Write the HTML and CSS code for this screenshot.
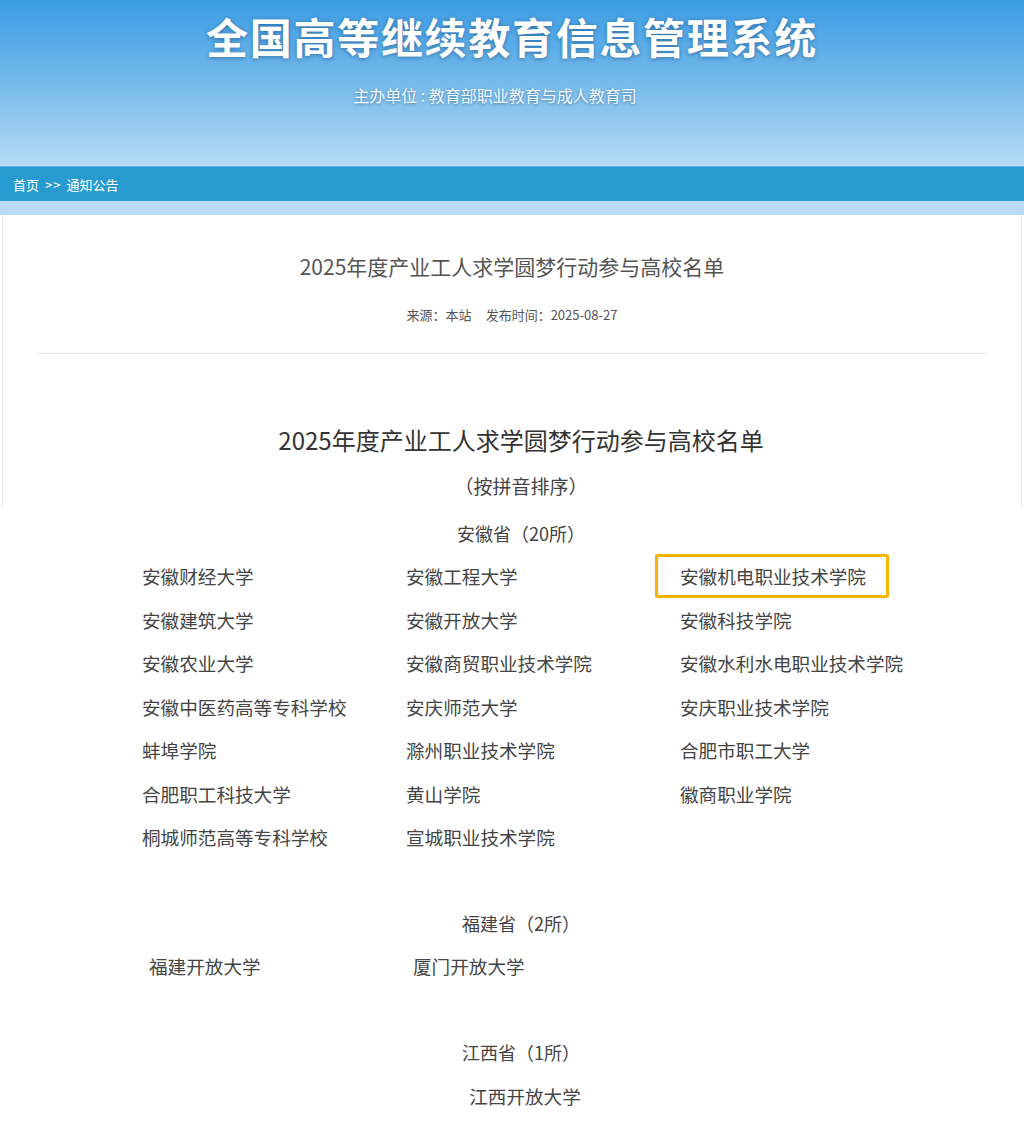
FILE: index.html
```html
<!DOCTYPE html>
<html lang="zh-CN">
<head>
  <meta charset="UTF-8">
  <title>2025年度产业工人求学圆梦行动参与高校名单</title>
  <link rel="stylesheet" href="styles.css">
</head>
<body>
  <!-- 页头 -->
  <div class="header">
    <h1 class="site-title">全国高等继续教育信息管理系统</h1>
    <p class="site-sub">主办单位 : 教育部职业教育与成人教育司</p>
  </div>

  <!-- 导航 -->
  <div class="crumb">
    <a href="#">首页</a><span class="sep">&gt;&gt;</span><a href="#">通知公告</a>
  </div>
  <div class="crumb-gap"></div>

  <!-- 正文 -->
  <div class="article">
    <div class="article-head">
      <h2 class="article-title">2025年度产业工人求学圆梦行动参与高校名单</h2>
      <div class="article-meta"><span>来源：本站</span><span>发布时间：2025-08-27</span></div>
    </div>
    <div class="article-body">
      <h3 class="list-title">2025年度产业工人求学圆梦行动参与高校名单</h3>
      <p class="list-note">（按拼音排序）</p>
    </div>
  </div>

  <div class="list">
    <p class="province">安徽省（20所）</p>
    <div class="school-grid">
      <div class="school">安徽财经大学</div>
      <div class="school">安徽工程大学</div>
      <div class="school mark">安徽机电职业技术学院</div>
      <div class="school">安徽建筑大学</div>
      <div class="school">安徽开放大学</div>
      <div class="school">安徽科技学院</div>
      <div class="school">安徽农业大学</div>
      <div class="school">安徽商贸职业技术学院</div>
      <div class="school">安徽水利水电职业技术学院</div>
      <div class="school">安徽中医药高等专科学校</div>
      <div class="school">安庆师范大学</div>
      <div class="school">安庆职业技术学院</div>
      <div class="school">蚌埠学院</div>
      <div class="school">滁州职业技术学院</div>
      <div class="school">合肥市职工大学</div>
      <div class="school">合肥职工科技大学</div>
      <div class="school">黄山学院</div>
      <div class="school">徽商职业学院</div>
      <div class="school">桐城师范高等专科学校</div>
      <div class="school">宣城职业技术学院</div>
    </div>

    <p class="province fj">福建省（2所）</p>
    <div class="school-grid two-col">
      <div class="school">福建开放大学</div>
      <div class="school">厦门开放大学</div>
    </div>

    <p class="province jx">江西省（1所）</p>
    <div class="school-single">江西开放大学</div>
  </div>
</body>
</html>
```

FILE: styles.css
```css
body {
  margin: 0;
  font-family: "Noto Sans CJK SC", "Liberation Sans", sans-serif;
  background: #fff;
  color: #333;
}
.header {
  height: 166px;
  background: linear-gradient(to bottom, #3c9ce3 0%, #6fb7ea 45%, #b6dbf5 100%);
  text-align: center;
  overflow: hidden;
}
.site-title {
  margin: 0;
  padding-top: 11px;
  font-size: 42px;
  line-height: 50px;
  letter-spacing: 1.7px;
  font-weight: bold;
  color: #fff;
  text-shadow: 0 1px 4px rgba(0, 40, 90, 0.45);
}
.site-sub {
  margin: 23px 34px 0 0;
  font-size: 16px;
  line-height: 22px;
  color: #f4f9ff;
  text-shadow: 0 1px 3px rgba(0, 40, 90, 0.45);
}
.crumb {
  height: 35px;
  line-height: 35px;
  padding-left: 13px;
  background: #279acf;
  border-top: 1px solid #5db6e4;
  box-sizing: border-box;
  font-size: 13px;
  color: #fff;
}
.crumb a {
  color: #fff;
  text-decoration: none;
}
.crumb .sep {
  margin: 0 5px 0 6px;
  letter-spacing: 1px;
}
.crumb-gap {
  height: 14px;
  background: #b9dcf4;
}
.article {
  margin: 0 2px;
  border-left: 1px solid #e6e6e6;
  border-right: 1px solid #e6e6e6;
  height: 293px;
}
.article-head {
  margin: 0 35px;
  padding-top: 36px;
  border-bottom: 1px solid #e3e3e3;
  text-align: center;
  height: 102px;
}
.article-title {
  margin: 0;
  font-size: 21px;
  line-height: 30px;
  font-weight: normal;
  color: #555;
}
.article-meta {
  margin-top: 25px;
  font-size: 13px;
  line-height: 18px;
  color: #555;
}
.article-meta span + span {
  margin-left: 14px;
}
.article-body {
  text-align: center;
  padding-left: 18px;
}
.list-title {
  margin: 69px 0 0;
  font-size: 24px;
  line-height: 34px;
  font-weight: normal;
  color: #333;
}
.list-note {
  margin: 16px 0 0;
  font-size: 19px;
  line-height: 26px;
  color: #444;
}
.list {
  padding-left: 18px;
  color: #444;
}
.province {
  margin: 13px 0 0;
  text-align: center;
  font-size: 18px;
  line-height: 24px;
}
.province.fj {
  margin-top: 52px;
}
.province.jx {
  margin-top: 53px;
}
.school-grid {
  display: grid;
  grid-template-columns: 264px 274px 234px;
  grid-auto-rows: 43.5px;
  width: 772px;
  margin: 9px 0 0 99px;
  font-size: 18.6px;
}
.school {
  display: flex;
  align-items: center;
  padding-left: 25px;
  white-space: nowrap;
}
.school.mark {
  box-sizing: border-box;
  padding-left: 22px;
  border: 3px solid #f4b400;
  border-radius: 2px;
}
.two-col {
  margin-left: 106px;
  margin-top: 9px;
}
.school-single {
  margin-top: 10px;
  text-align: center;
  font-size: 18.6px;
  line-height: 43px;
  padding-left: 8px;
}
```
